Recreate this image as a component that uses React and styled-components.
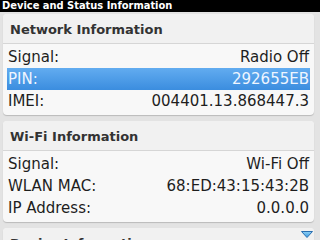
import React from "react";
import styled, { createGlobalStyle } from "styled-components";

const GlobalStyle = createGlobalStyle`
  html, body {
    margin: 0;
    padding: 0;
    width: 320px;
    height: 240px;
    overflow: hidden;
    background: #e3e3e3;
  }
  * { box-sizing: border-box; }
`;

const Screen = styled.div`
  position: relative;
  width: 320px;
  height: 240px;
  overflow: hidden;
  background: #e3e3e3;
  font-family: "DejaVu Sans", "Liberation Sans", sans-serif;
`;

const TitleBar = styled.div`
  height: 12px;
  background: #000;
  color: #fff;
  font-family: "DejaVu Sans Condensed", "DejaVu Sans", sans-serif;
  font-stretch: condensed;
  font-weight: bold;
  font-size: 11px;
  line-height: 12px;
  padding-left: 2px;
  white-space: nowrap;
`;

const Content = styled.div`
  display: flex;
  flex-direction: column;
  gap: 6px;
  padding: 2px 6px 0 3px;
`;

const Panel = styled.section`
  background: #f8f8f8;
  border-radius: 4px;
  box-shadow: 0 1px 1px rgba(0, 0, 0, 0.18);
`;

const PanelHeader = styled.div`
  height: 30px;
  display: flex;
  align-items: center;
  padding: 2px 0 0 7px;
  background: #f1f1f1;
  border-radius: 4px 4px 0 0;
  border-bottom: 1px solid #d6d6d6;
  color: #333;
  font-weight: bold;
  font-size: 13px;
  white-space: nowrap;
`;

const Rows = styled.div`
  padding: 2px 4px 3px 4px;
`;

const Row = styled.div`
  height: 22px;
  display: flex;
  align-items: center;
  justify-content: space-between;
  padding: 0 1px;
  font-size: 15px;
  color: ${(p) => (p.$selected ? "#eef5ff" : "#1e1e1e")};
  background: ${(p) =>
    p.$selected ? "linear-gradient(#62acf0, #3b8ddf)" : "transparent"};
  white-space: nowrap;
`;

const ScrollArrow = styled.svg`
  position: absolute;
  right: 7px;
  bottom: 2px;
`;

const sections = [
  {
    title: "Network Information",
    rows: [
      ["Signal:", "Radio Off"],
      ["PIN:", "292655EB", true],
      ["IMEI:", "004401.13.868447.3"],
    ],
  },
  {
    title: "Wi-Fi Information",
    rows: [
      ["Signal:", "Wi-Fi Off"],
      ["WLAN MAC:", "68:ED:43:15:43:2B"],
      ["IP Address:", "0.0.0.0"],
    ],
  },
  { title: "Device Information", rows: [] },
];

export default function App() {
  return (
    <Screen>
      <GlobalStyle />
      <TitleBar>Device and Status Information</TitleBar>
      <Content>
        {sections.map((s) => (
          <Panel key={s.title}>
            <PanelHeader>{s.title}</PanelHeader>
            {s.rows.length > 0 && (
              <Rows>
                {s.rows.map(([k, v, sel]) => (
                  <Row key={k} $selected={sel}>
                    <span>{k}</span>
                    <span>{v}</span>
                  </Row>
                ))}
              </Rows>
            )}
          </Panel>
        ))}
      </Content>
      <ScrollArrow width="12" height="7" viewBox="0 0 12 7">
        <defs>
          <linearGradient id="ag" x1="0" y1="0" x2="0" y2="1">
            <stop offset="0" stopColor="#8fd0f5" />
            <stop offset="1" stopColor="#3a9be0" />
          </linearGradient>
        </defs>
        <path d="M0.5 0.5 H11.5 L6 6.5 Z" fill="url(#ag)" stroke="#2a6fb0" strokeWidth="1" strokeLinejoin="round" />
      </ScrollArrow>
    </Screen>
  );
}
